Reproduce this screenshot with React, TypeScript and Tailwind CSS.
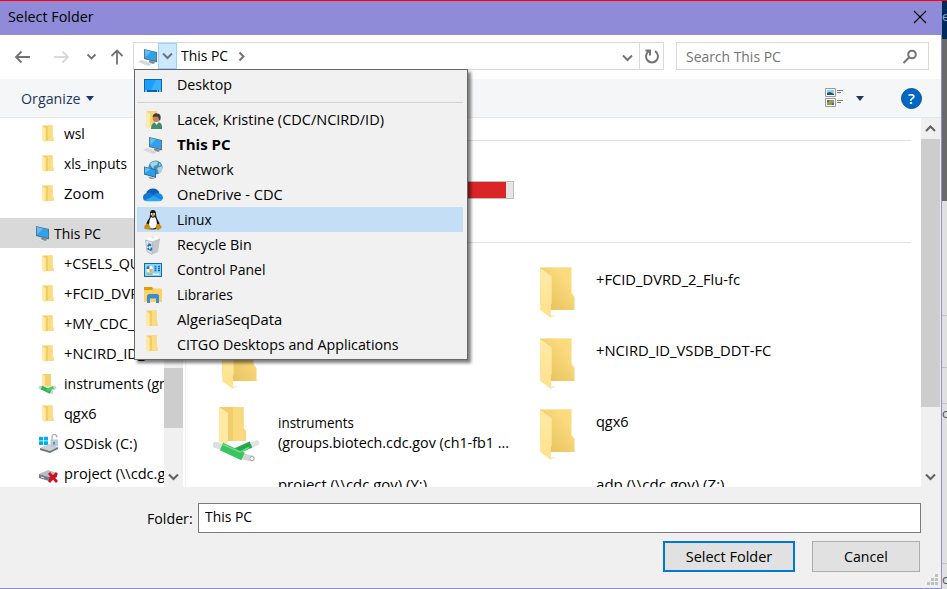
import { useLayoutEffect, useRef, useState, type ReactNode } from "react";

/* Text squeezed horizontally so that it takes exactly `w` pixels. */
function Fit({ w, className = "", children }: { w: number; className?: string; children: ReactNode }) {
  const ref = useRef<HTMLSpanElement>(null);
  const [scale, setScale] = useState(1);
  useLayoutEffect(() => {
    if (ref.current) setScale(w / ref.current.offsetWidth);
  }, [w]);
  return (
    <span className={`block h-5 shrink-0 leading-5 ${className}`} style={{ width: w }}>
      <span ref={ref} className="inline-block origin-left whitespace-nowrap" style={{ transform: `scaleX(${scale})` }}>
        {children}
      </span>
    </span>
  );
}

function FolderSmall() {
  return (
    <svg width="20" height="20" viewBox="0 0 20 20">
      <path d="M4 1.500h10.500v11l1 1.500v3H7z" fill="#f1cd6a" />
      <path d="M10 1.500h4.500v11l1 1.500v3H10z" fill="#fbdc80" />
      <path d="M4 1.500l3.700 3v11.500l-.7 2.800-3-2.800z" fill="#ffeaa5" />
    </svg>
  );
}

function FolderLarge() {
  return (
    <svg width="38" height="54" viewBox="0 0 38 54" className="block shrink-0">
      <defs>
        <linearGradient id="back" x1="0" x2="1" y1="1" y2="0">
          <stop offset="0.2" stopColor="#e9c561" />
          <stop offset="0.75" stopColor="#fbdb7e" />
        </linearGradient>
        <linearGradient id="flap" x1="0" x2="0" y1="0" y2="1">
          <stop offset="0" stopColor="#ffeba9" />
          <stop offset="1" stopColor="#ffe18a" />
        </linearGradient>
      </defs>
      <path d="M11 48l5 0-5 3zM34.500 42l3 0-3 1z" fill="#eeecea" />
      <path d="M0 0h31.500v26l3 4v13H8L0 36z" fill="url(#back)" />
      <path d="M0 .5h31.500" stroke="#f9e6ad" />
      <path d="M.2 1l11.500 8.500v27l-.8 1.500v13L.2 43z" fill="url(#flap)" />
    </svg>
  );
}

function Pc() {
  return (
    <svg width="20" height="20" viewBox="0 0 20 20">
      <path d="M6 2l13 3v10.500L6 12z" fill="#5c7282" />
      <path d="M6.800 3L18 5.600v8.400L6.800 11z" fill="#2fa2ed" />
      <path d="M7 3l6 1.500L7.500 10z" fill="#62bef7" />
      <path d="M11 13.500l5 1 1 1.500-2 1-4-1.500z" fill="#7c8b96" />
      <path d="M0 15l4-2 10.500 3.600L10 19z" fill="#cdd2d6" />
      <path d="M1.500 15l9 3M4 13.800l9 3" stroke="#eef0f2" strokeWidth=".8" strokeDasharray="1.500 .8" />
    </svg>
  );
}

function DesktopIcon() {
  return (
    <svg width="20" height="20" viewBox="0 0 20 20">
      <path d="M1 4h18v13H1z" fill="#0b64ac" />
      <path d="M2 5h16v10H2z" fill="#1aa0fb" />
      <path d="M13 5h5v10H8z" fill="#3bb0ff" />
      <path d="M2 16h2M14 16h1M16 16h2" stroke="#fff" strokeWidth="1" />
    </svg>
  );
}

function UserIcon() {
  return (
    <svg width="20" height="20" viewBox="0 0 20 20">
      <path d="M3 1h11v15H6z" fill="#f5d579" />
      <path d="M3 1l4 3v13l-1 2-3-2z" fill="#ffeaa9" />
      <path d="M8 19q0-7 6-7t5 7z" fill="#3f8d70" />
      <path d="M11.500 12l2 3 2.500-3z" fill="#f2eee8" />
      <circle cx="13.300" cy="8.500" r="3.600" fill="#bd8260" />
      <path d="M9.500 7q1-4.500 5-3.500 4 .5 3 6l-1.500 1q0-4-2.500-4t-4 .5z" fill="#423c35" />
    </svg>
  );
}

function NetworkIcon() {
  return (
    <svg width="20" height="20" viewBox="0 0 20 20">
      <circle cx="12.500" cy="7.500" r="7" fill="#3f90b8" />
      <path d="M7 4q3-4 8-2l-1 3-3 1-1 3zM14 8l5-2q1 5-3 8zM16 3l2 2-2 1z" fill="#a8d3e3" />
      <path d="M1 6.500l12 3v8.500L1 14.500z" fill="#42657f" />
      <path d="M1.700 7.500l10.500 2.700v6.600L1.700 13.800z" fill="#25a1f3" />
      <path d="M2 7.500l6 1.600L2 13z" fill="#61c1fb" />
      <path d="M5 16.500l5 1 2 1.500H7z" fill="#9aa8b2" />
    </svg>
  );
}

function CloudIcon() {
  return (
    <svg width="20" height="20" viewBox="0 0 20 20">
      <path d="M3 8.500Q5 3.500 10 3.500t6.500 4.700L10 12z" fill="#0f5fb6" />
      <path d="M4.500 8Q0 8.500 0 12.500 0 16 4 16l9-5-4.500-2.500Q7 7.500 4.500 8z" fill="#1377d4" />
      <path d="M9.500 10.500l4-2.300q6-.5 6.500 4.300-.5 3.500-4 3.500H4l7-4.500z" fill="#1488e2" />
      <path d="M2 15l8.500-4 8.500 4q-1.500 1.200-3.500 1.200H4q-1 0-2-1.200z" fill="#28a8ee" />
    </svg>
  );
}

function LinuxIcon() {
  return (
    <svg width="20" height="22" viewBox="0 0 20 22">
      <path d="M10 1Q6.500 1 7 6q.2 2.500-2 5-2.500 4-1.500 7 3 3 6 2.500 4.500.5 7-3 .5-4-2.500-8-1-2-1-4.500Q13 1 10 1z" fill="#171717" />
      <path d="M8 8q2 1.500 4 0 2 3 2 7t-4 4.500-4-4.500q.2-4 2-7z" fill="#fafafa" />
      <circle cx="8.700" cy="5" r="1" fill="#fff" />
      <circle cx="11" cy="5" r="1" fill="#fff" />
      <path d="M8 6.500l2-.8 2 .8-2 1.500z" fill="#e9a21b" />
      <path d="M1.500 17l2-2.500 2 .5 2.500 4.500q-1 2-4 .8l-3-.8zM13.500 15h3l2.500 3q-1 1.500-3.500 3-2.500 0-2.500-2z" fill="#c68f16" />
    </svg>
  );
}

function RecycleIcon() {
  return (
    <svg width="20" height="20" viewBox="0 0 20 20">
      <path d="M2.500 5l7.500-3 7 2-2 13-6 2.500-5-3z" fill="#c3c8cd" />
      <path d="M2.500 5l7 2-.5 12.500-5-3z" fill="#dde1e5" />
      <path d="M2.500 5l4-3 3.500 1 3-2 4 3-7.500 3z" fill="#fafbfb" />
      <path d="M2.500 5l7 2 7.500-3M9.500 7L9 19.300M2.500 5l1.500 11.500 5 3" stroke="#a9afb5" strokeWidth=".7" fill="none" />
      <path d="M4.800 11.500l1.400-2.300 2 1.300M8.300 12.500v2.300l-1.800.5M5.800 14.800l-.9-2" stroke="#1672bb" strokeWidth="1.600" fill="none" />
    </svg>
  );
}

function ControlIcon() {
  return (
    <svg width="20" height="20" viewBox="0 0 20 20">
      <path d="M1 3h18v14H1z" fill="#176a9e" />
      <path d="M2 4h16v12H2z" fill="#8bd4f7" />
      <circle cx="6.500" cy="9" r="3.300" fill="#fff" />
      <path d="M6.500 9V5.700A3.300 3.300 0 0 0 3.200 9z" fill="#1c80cc" />
      <path d="M6.500 9h3.300a3.300 3.300 0 0 1-3.300 3.300z" fill="#eda83a" />
      <path d="M11.500 6.500h2M11.500 8.500h2M11.500 10.500h2M15 6.500h2M15 8.500h2M15 10.500h2" stroke="#1773b8" strokeWidth="1.300" />
      <path d="M4 14.300h5" stroke="#ee9c25" strokeWidth="1.300" />
      <path d="M10 14.300h6" stroke="#fff" strokeWidth="1.300" />
    </svg>
  );
}

function LibraryIcon() {
  return (
    <svg width="20" height="20" viewBox="0 0 20 20">
      <path d="M1 2h8l1.500 2-2 2H1z" fill="#dc9c0b" />
      <path d="M1 5h8l2-1.500h8V17H1z" fill="#fdd166" />
      <path d="M4 18v-7.500L5.500 9h9l1.500 1.500V18h-3v-4.500H7V18z" fill="#358ed5" />
    </svg>
  );
}

function InstrumentSmall() {
  return (
    <svg width="20" height="22" viewBox="0 0 20 22">
      <path d="M4 1h9v10l1 2.500H6z" fill="#f5d06c" />
      <path d="M4 1l3 2v10.500H4z" fill="#ffe9a4" />
      <path d="M1 14l4 1.500M15 19.500l-3-1M18 14l-3 1.500" stroke="#cfd3d3" strokeWidth="3.500" />
      <path d="M3.500 14.500l9 4.500" stroke="#2fb657" strokeWidth="4" />
      <path d="M9 17l6.500-2.500" stroke="#49cc6b" strokeWidth="3" />
    </svg>
  );
}

function InstrumentLarge() {
  return (
    <svg width="48" height="56" viewBox="0 0 48 56" className="block shrink-0">
      <path d="M6 1h24.500v21l2.500 3v10H14z" fill="#f1cd6b" />
      <path d="M20 1h10.500v21l2.500 3v10H20z" fill="#f8d97e" />
      <path d="M6 1l9 6v29l-1 2-8-2z" fill="#ffe9a3" />
      <path d="M36 40l7.500-3" stroke="#e1e4e3" strokeWidth="5.500" strokeLinecap="round" />
      <path d="M19 47L38 38.500" stroke="#23a84b" strokeWidth="6.500" />
      <path d="M3 39l7 2" stroke="#dcdfdf" strokeWidth="6.500" strokeLinecap="round" />
      <path d="M30 50.500l9 2" stroke="#d3d6d6" strokeWidth="6" strokeLinecap="round" />
      <path d="M8.500 40.500l21.500 10" stroke="#38c45f" strokeWidth="8" />
      <path d="M10 38.500l17 7.500 9-4.500" stroke="#70dc88" strokeWidth="1.500" fill="none" />
      <ellipse cx="39" cy="52.500" rx="2" ry="2.300" fill="#fff" stroke="#a9afae" />
    </svg>
  );
}

function DiskIcon() {
  return (
    <svg width="22" height="20" viewBox="0 0 22 20">
      <path d="M1 3h4v3.500H1zM5.800 2.800H10v3.700H5.800zM1 7.300h4V11H1zM5.800 7.300H10V11H5.800z" fill="#00adef" />
      <path d="M2 14l9-4 9 3-8 4z" fill="#cbd0d3" />
      <path d="M2 14l10 3v2L2 16zM12 17l8-4v2l-8 4z" fill="#6c7478" />
      <path d="M14 6V3q0-3 3-2.500 2 .3 2 3" fill="none" stroke="#a9b0b6" strokeWidth="1.300" />
      <path d="M12.500 5.500H20v6.500l-7.500 1z" fill="#b4cbdb" />
      <path d="M16 8v2.500" stroke="#486b80" strokeWidth="1.300" />
    </svg>
  );
}

function BadDriveIcon() {
  return (
    <svg width="22" height="20" viewBox="0 0 22 20">
      <path d="M1 10l9-4 9 3-8 4z" fill="#b9bdc0" />
      <path d="M1 10l10 3v4L1 14z" fill="#777c80" />
      <path d="M11 13l8-4v4l-8 4z" fill="#555b5f" />
      <path d="M3 13l3 1" stroke="#e4e4e4" />
      <path d="M11 9l8 9M19 9l-8 9" stroke="#d80d20" strokeWidth="2.800" />
    </svg>
  );
}

function Chevron({ dir, className = "" }: { dir: "up" | "down" | "right"; className?: string }) {
  const d = dir === "up" ? "M2 9l4.500-4.500L11 9" : dir === "down" ? "M2 4.500L6.500 9 11 4.500" : "M4.500 2.500l4 4-4 4";
  return (
    <svg width="13" height="13" viewBox="0 0 13 13" fill="none" stroke="currentColor" strokeWidth="2" className={`block shrink-0 ${className}`}>
      <path d={d} />
    </svg>
  );
}

type Row = { label: string; w: number; icon: ReactNode; bold?: boolean; selected?: boolean };

const history: Row[] = [
  { label: "Lacek, Kristine (CDC/NCIRD/ID)", w: 207, icon: <UserIcon /> },
  { label: "This PC", w: 54, icon: <Pc />, bold: true },
  { label: "Network", w: 57, icon: <NetworkIcon /> },
  { label: "OneDrive - CDC", w: 106, icon: <CloudIcon /> },
  { label: "Linux", w: 35, icon: <LinuxIcon />, selected: true },
  { label: "Recycle Bin", w: 75, icon: <RecycleIcon /> },
  { label: "Control Panel", w: 88, icon: <ControlIcon /> },
  { label: "Libraries", w: 56, icon: <LibraryIcon /> },
  { label: "AlgeriaSeqData", w: 105, icon: <span className="-ml-px -mt-[2px]"><FolderSmall /></span> },
  { label: "CITGO Desktops and Applications", w: 222, icon: <span className="-ml-px -mt-[2px]"><FolderSmall /></span> },
];

const treeTop: Row[] = [
  { label: "wsl", w: 21, icon: <FolderSmall /> },
  { label: "xls_inputs", w: 63, icon: <FolderSmall /> },
  { label: "Zoom", w: 40, icon: <FolderSmall /> },
];

const treeBottom: Row[] = [
  { label: "+CSELS_QUAL", w: 93, icon: <FolderSmall /> },
  { label: "+FCID_DVRD_2", w: 101, icon: <FolderSmall /> },
  { label: "+MY_CDC_Files", w: 100, icon: <FolderSmall /> },
  { label: "+NCIRD_ID_VSDB", w: 118, icon: <FolderSmall /> },
  { label: "instruments (groups", w: 133, icon: <InstrumentSmall /> },
  { label: "qgx6", w: 33, icon: <FolderSmall /> },
  { label: "OSDisk (C:)", w: 73, icon: <DiskIcon /> },
  { label: "project (\\\\cdc.gov)", w: 122, icon: <BadDriveIcon /> },
];

function TreeRow({ label, w, icon }: Row) {
  return (
    <div className="flex h-[30px] items-center pt-[2px] pl-[38px]">
      <span className="flex w-[26px] shrink-0 items-center">{icon}</span>
      <Fit w={w}>{label}</Fit>
    </div>
  );
}

function MenuRow({ label, w, icon, bold, selected }: Row) {
  return (
    <div className={`mr-[4px] ml-[2px] flex h-[25px] items-center pl-[6px] ${selected ? "bg-[#c4def5]" : ""}`}>
      <span className="flex w-[34px] shrink-0 items-center">{icon}</span>
      <Fit w={w} className={bold ? "font-bold" : ""}>{label}</Fit>
    </div>
  );
}

function HistoryMenu() {
  return (
    <div className="absolute top-[69px] left-[134px] h-[291px] w-[334px] border border-[#686868] bg-[#f1f1f1] shadow-[3px_3px_3px_rgba(0,0,0,0.5)]">
      <div className="pt-[2px]">
        <MenuRow label="Desktop" w={55} icon={<DesktopIcon />} />
      </div>
      <div className="mr-[4px] mt-[5px] mb-[4px] ml-[2px] h-px bg-[#d2d2d2]" />
      {history.map((row) => (
        <MenuRow key={row.label} {...row} />
      ))}
    </div>
  );
}

function NavBar() {
  return (
    <div className="flex h-[44px] shrink-0 items-start bg-white pt-[7px]">
      <div className="flex h-[28px] w-[133px] shrink-0 items-center text-[#737373]">
        <svg width="133" height="28" viewBox="0 0 133 28" fill="none" stroke="currentColor" strokeWidth="1.800">
          <path d="M30 15H16M21.500 9.500L16 15l5.500 5.500" />
          <path d="M54 15h14M62.500 9.500L68 15l-5.500 5.500" stroke="#d9d9d9" />
          <path d="M87.500 12.500l4 4 4-4" />
          <path d="M117 22.500V8.500M111.500 14L117 8.500l5.500 5.500" />
        </svg>
      </div>
      <div className="flex h-[28px] w-[531px] shrink-0 items-center border border-[#d9d9d9]">
        <span className="flex w-[24px] shrink-0 pt-[2px] pl-1"><Pc /></span>
        <span className="flex h-[26px] w-[19px] shrink-0 items-center justify-center border border-[#99d1ff] bg-[#cce8ff] pb-[2px] text-[#6d7478]">
          <Chevron dir="down" />
        </span>
        <Fit w={47} className="ml-[4px]">This PC</Fit>
        <Chevron dir="right" className="ml-[7px] text-[#737373]" />
        <Chevron dir="down" className="mt-[3px] ml-auto text-[#737373]" />
        <span className="ml-[5px] flex h-[26px] w-[24px] items-center justify-center border-l border-[#d9d9d9] text-[#737373]">
          <svg width="16" height="18" viewBox="0 0 16 18" fill="none" stroke="currentColor" strokeWidth="2">
            <path d="M11 4.200A6 6 0 1 1 5 4.200M1.500 3.500H6v5" />
          </svg>
        </span>
      </div>
      <div className="ml-[12px] flex h-[28px] w-[253px] shrink-0 items-center border border-[#d9d9d9] pt-px pl-[9px] text-[#737373]">
        <Fit w={95}>Search This PC</Fit>
        <svg width="16" height="16" viewBox="0 0 16 16" fill="none" stroke="currentColor" strokeWidth="2" className="mr-[10px] ml-auto">
          <circle cx="10" cy="5.500" r="3.800" />
          <path d="M7 8.500L1.500 14" />
        </svg>
      </div>
    </div>
  );
}

function ToolBar() {
  return (
    <div className="flex h-[39px] shrink-0 items-center border-b border-[#e5e8eb] bg-[#f5f6f8] pl-[21px] text-[#1e395b]">
      <Fit w={60} className="mt-[2px]">Organize</Fit>
      <svg width="8" height="5" viewBox="0 0 8 5" className="ml-[5px]"><path d="M0 0h8L4 5z" fill="#1e395b" /></svg>
      <svg width="19" height="20" viewBox="0 0 19 20" className="mr-[12px] ml-auto">
        <path d="M.5.5h10v8H.5zM.5 10.500h10v8H.5z" fill="#fff" stroke="#999" />
        <path d="M2 2h7v5H2z" fill="#8fcdf1" />
        <path d="M2 5l3-1 4 2v1H2z" fill="#254f6c" />
        <path d="M2 12h7v5H2z" fill="#76a849" />
        <path d="M2 12h2v2H2zM7 15h2v2H7z" fill="#426bc2" />
        <path d="M4 13h3v2H4z" fill="#e47d35" />
        <path d="M12 2.500h6M12 4.500h4M12 12.500h6M12 14.500h4" stroke="#777" />
      </svg>
      <svg width="8" height="5" viewBox="0 0 8 5"><path d="M0 0h8L4 5z" fill="#1e395b" /></svg>
      <span className="mr-[19px] ml-[37px] flex size-[21px] items-center justify-center rounded-full border border-[#0a4f9c] bg-[#0067c5] text-[15px] leading-none font-semibold text-white">?</span>
    </div>
  );
}

function SideBar() {
  return (
    <div className="flex w-[186px] shrink-0 border-r border-[#f0f0f0]">
      <div className="w-[164px] shrink-0 overflow-hidden">
        {treeTop.map((row) => <TreeRow key={row.label} {...row} />)}
        <div className="mt-[10px] flex h-[30px] items-center bg-[#d9d9d9] pt-[2px] pl-[30px]">
          <span className="flex w-[24px] shrink-0">{<Pc />}</span>
          <Fit w={47}>This PC</Fit>
        </div>
        {treeBottom.map((row) => <TreeRow key={row.label} {...row} />)}
      </div>
      <div className="flex w-[19px] shrink-0 flex-col items-center bg-[#f0f0f0] pt-[250px] text-[#606060]">
        <div className="h-[60px] w-[19px] shrink-0 bg-[#cdcdcd]" />
        <Chevron dir="down" className="mt-auto mb-[4px]" />
      </div>
    </div>
  );
}

function Tile({ lines, icon, indent, drop = "pt-[3px]" }: { lines: [string, number][]; icon?: ReactNode; indent: string; drop?: string }) {
  return (
    <div className="flex">
      <div className={`w-[92px] shrink-0 ${indent}`}>{icon}</div>
      <div className={drop}>
        {lines.map(([text, w]) => <Fit key={text} w={w}>{text}</Fit>)}
      </div>
    </div>
  );
}

function MainPane() {
  return (
    <div className="flex min-w-0 flex-1">
      <div className="flex-1 overflow-hidden">
        <div className="mt-[22px] mr-[10px] h-px bg-[#e2e2e2]" />
        <div className="mt-[40px] ml-[92px] flex h-[18px] w-[236px] border border-[#bcbcbc] bg-[#e6e6e6]">
          <div className="w-[227px] bg-[#da2626]" />
        </div>
        <div className="mt-[43px] mr-[10px] h-px bg-[#e2e2e2]" />
        <div className="mt-[24px] grid grid-cols-[318px_1fr] grid-rows-[71px_71px_63px_30px]">
          <Tile indent="pl-[36px]" icon={<FolderLarge />} lines={[["+CSELS_QUAL", 93]]} />
          <Tile indent="pl-[36px]" icon={<FolderLarge />} lines={[["+FCID_DVRD_2_Flu-fc", 144]]} />
          <Tile indent="pl-[36px]" icon={<FolderLarge />} lines={[["+MY_CDC_Files", 100]]} />
          <Tile indent="pl-[36px]" icon={<FolderLarge />} lines={[["+NCIRD_ID_VSDB_DDT-FC", 175]]} />
          <Tile indent="pl-[27px] -mt-[3px]" drop="pt-[4px]" icon={<InstrumentLarge />} lines={[["instruments", 76], ["(groups.biotech.cdc.gov (ch1-fb1 ...", 231]]} />
          <Tile indent="pl-[36px]" icon={<FolderLarge />} lines={[["qgx6", 33]]} />
          <Tile indent="" lines={[["project (\\\\cdc.gov) (Y:)", 149]]} />
          <Tile indent="" lines={[["adp (\\\\cdc.gov) (Z:)", 129]]} />
        </div>
      </div>
      <div className="flex w-[20px] shrink-0 flex-col bg-[#f0f0f0] text-[#606060]">
        <Chevron dir="up" className="mt-[4px] mb-[4px] ml-[3px]" />
        <div className="h-[268px] w-[19px] shrink-0 bg-[#cdcdcd]" />
        <Chevron dir="down" className="mt-auto mb-[4px] ml-[3px]" />
      </div>
    </div>
  );
}

function Footer() {
  return (
    <div className="relative h-[101px] shrink-0 bg-[#f0f0f0] pt-[16px]">
      <div className="flex items-center pl-[147px]">
        <Fit w={46} className="mt-[2px]">Folder:</Fit>
        <div className="ml-[5px] flex h-[30px] w-[723px] border border-[#7a7a7a] bg-white pt-[3px] pl-[6px]">
          <Fit w={47}>This PC</Fit>
        </div>
      </div>
      <div className="mt-[8px] mr-[21px] flex justify-end gap-[17px]">
        <button className="flex h-[31px] w-[132px] items-center justify-center border-2 border-[#0078d7] bg-[#e1e1e1]"><Fit w={87}>Select Folder</Fit></button>
        <button className="flex h-[31px] w-[108px] items-center justify-center border border-[#adadad] bg-[#e1e1e1]"><Fit w={44}>Cancel</Fit></button>
      </div>
      <svg width="12" height="12" viewBox="0 0 12 12" fill="#bfbfbf" className="absolute right-[2px] bottom-[2px]">
        <path d="M8 0h3v3H8zM4 4h3v3H4zM8 4h3v3H8zM0 8h3v3H0zM4 8h3v3H4zM8 8h3v3H8z" />
      </svg>
    </div>
  );
}

/* Slice of the window behind the dialog. */
function Backdrop() {
  return (
    <div className="flex w-[5px] shrink-0 flex-col overflow-hidden bg-[#e0e0e0] text-[13px] leading-none">
      <div className="h-[38px] shrink-0 bg-[#002a5c] pt-[9px] text-[#a0a8b4]">e</div>
      <div className="h-[162px] shrink-0 bg-[#6a6a6a]" />
      <div className="h-[115px] shrink-0 border-b border-[#c4c4c4]" />
      <div className="h-[52px] shrink-0 border-b border-[#c4c4c4]" />
      <div className="h-[36px] shrink-0 border-b border-[#c4c4c4]" />
      <div className="h-[160px] shrink-0 border-b border-[#c4c4c4] pt-[3px] text-[#4b535c]">o</div>
      <div className="pt-[9px] text-[#4b535c]">o</div>
    </div>
  );
}

export default function App() {
  return (
    <div className="relative flex h-[589px] w-[947px] flex-col overflow-hidden bg-white font-['Open_Sans','Noto_Sans',sans-serif] text-[14.5px] text-black">
      <div className="h-px shrink-0 bg-[#ff0000]" />
      <div className="flex min-h-0 flex-1">
        <div className="flex w-[942px] shrink-0 flex-col border-r border-b border-[#8f8bd8]">
          <div className="flex h-[34px] shrink-0 items-center justify-between bg-[#8f8bd8] pr-[14px] pl-[8px]">
            <Fit w={86} className="-mt-[2px]">Select Folder</Fit>
            <svg width="14" height="14" viewBox="0 0 14 14" stroke="#000" strokeWidth="1.100" className="mb-[3px]"><path d="M1 1l12 12M13 1L1 13" /></svg>
          </div>
          <NavBar />
          <ToolBar />
          <div className="flex h-[369px] shrink-0 overflow-hidden bg-white">
            <SideBar />
            <MainPane />
          </div>
          <Footer />
        </div>
        <Backdrop />
      </div>
      <HistoryMenu />
    </div>
  );
}
